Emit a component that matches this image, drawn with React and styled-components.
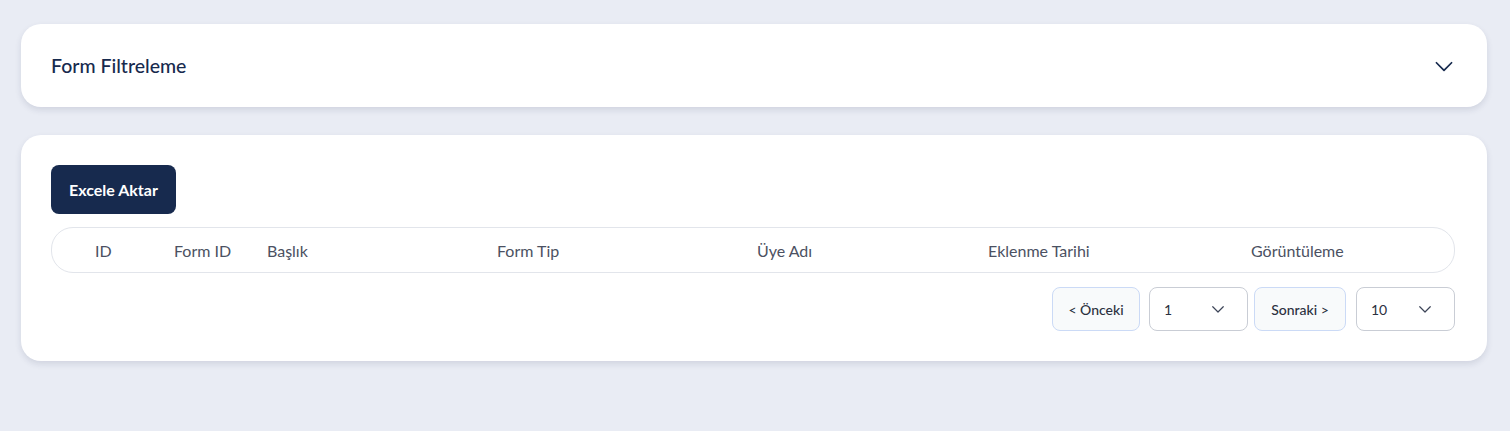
import React from 'react';
import styled, { createGlobalStyle } from 'styled-components';

const GlobalStyle = createGlobalStyle`
  html, body {
    margin: 0;
    padding: 0;
    background: #e9ecf4;
  }
  body {
    font-family: "Lato", "Noto Sans", sans-serif;
    color: #172a4e;
  }
`;

const Page = styled.div`
  padding: 24px 23px 24px 21px;
  display: flex;
  flex-direction: column;
  gap: 28px;
`;

const Card = styled.section`
  background: #ffffff;
  border-radius: 20px;
  box-shadow: 0 3px 6px rgba(30, 45, 80, 0.12);
`;

const FilterHeader = styled.div`
  height: 83px;
  padding: 0 30px;
  display: flex;
  align-items: center;
  justify-content: space-between;
`;

const FilterTitle = styled.h2`
  margin: 0;
  font-size: 19.5px;
  font-weight: 500;
  color: #172a4e;
`;

const Body = styled.div`
  padding: 30px 32px 30px 30px;
  display: flex;
  flex-direction: column;
  align-items: flex-start;
`;

const PrimaryButton = styled.button`
  height: 49px;
  padding: 0 18px;
  border: none;
  border-radius: 8px;
  background: #172a4e;
  color: #ffffff;
  font-family: inherit;
  font-size: 16px;
  font-weight: 700;
  cursor: pointer;
`;

const TableHead = styled.div`
  margin-top: 13px;
  align-self: stretch;
  height: 46px;
  box-sizing: border-box;
  border: 1px solid #e2e5eb;
  border-radius: 22px;
  padding-left: 43px;
  display: grid;
  grid-template-columns: 79px 93px 230px 260px 231px 263px 1fr;
  align-items: center;
`;

const HeadCell = styled.span`
  font-size: 16px;
  color: #4b5162;
`;

const Pager = styled.div`
  margin-top: 14px;
  align-self: flex-end;
  display: flex;
`;

const PagerButton = styled.button`
  height: 44px;
  width: ${p => p.$w}px;
  box-sizing: border-box;
  border: 1px solid #cbdaf6;
  border-radius: 8px;
  background: #f8fafb;
  color: #2b3140;
  font-family: inherit;
  font-size: 14px;
  font-weight: 500;
  margin-right: ${p => p.$mr || 0}px;
`;

const Select = styled.div`
  height: 44px;
  width: 99px;
  box-sizing: border-box;
  border: 1px solid #c9cdd5;
  border-radius: 8px;
  background: #ffffff;
  padding: 0 20px 0 14px;
  display: flex;
  align-items: center;
  justify-content: space-between;
  font-size: 14px;
  color: #2b3140;
  margin-right: ${p => p.$mr || 0}px;
`;

const Chevron = ({ size = 20, color = '#172a4e', width = 1.8 }) => (
  <svg width={size} height={size} viewBox="0 0 24 24" fill="none" stroke={color} strokeWidth={width} strokeLinecap="round" strokeLinejoin="round">
    <path d="M5 9l7 7 7-7" />
  </svg>
);

const columns = ['ID', 'Form ID', 'Başlık', 'Form Tip', 'Üye Adı', 'Eklenme Tarihi', 'Görüntüleme'];

export default function App() {
  return (
    <>
      <GlobalStyle />
      <Page>
        <Card>
          <FilterHeader>
            <FilterTitle>Form Filtreleme</FilterTitle>
            <Chevron size={26} width={1.6} />
          </FilterHeader>
        </Card>
        <Card>
          <Body>
            <PrimaryButton>Excele Aktar</PrimaryButton>
            <TableHead>
              {columns.map(c => (
                <HeadCell key={c}>{c}</HeadCell>
              ))}
            </TableHead>
            <Pager>
              <PagerButton $w={88} $mr={9}>&lt; Önceki</PagerButton>
              <Select $mr={6}>
                <span>1</span>
                <Chevron size={18} color="#3c4457" width={1.6} />
              </Select>
              <PagerButton $w={92} $mr={10}>Sonraki &gt;</PagerButton>
              <Select>
                <span>10</span>
                <Chevron size={18} color="#3c4457" width={1.6} />
              </Select>
            </Pager>
          </Body>
        </Card>
      </Page>
    </>
  );
}
